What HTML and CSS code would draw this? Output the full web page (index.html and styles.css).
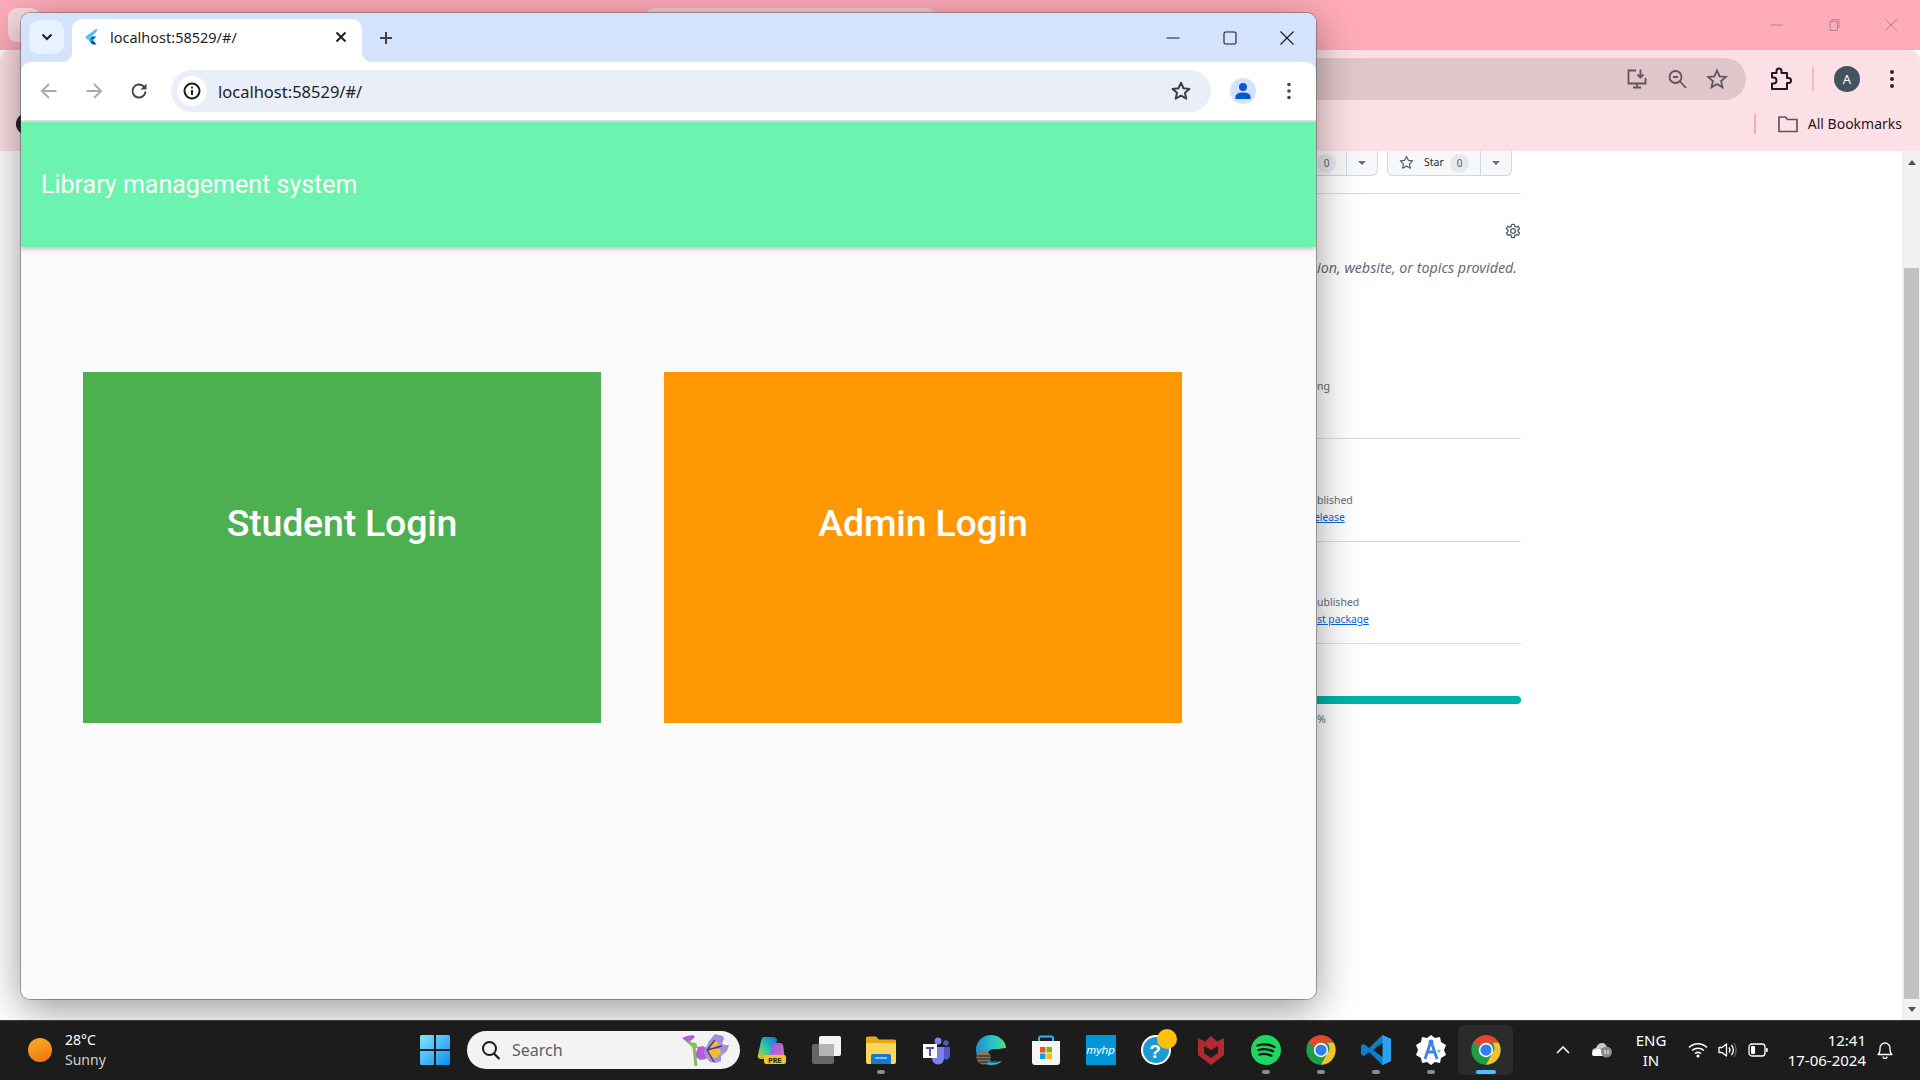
FILE: index.html
```html
<!DOCTYPE html>
<html lang="en">
<head>
<meta charset="utf-8">
<title>Library management system</title>
<link rel="stylesheet" href="styles.css">
</head>
<body>
<svg class="defs" width="0" height="0" aria-hidden="true">
  <symbol id="chrome" viewBox="0 0 48 48">
    <circle cx="24" cy="24" r="23.500" fill="#1f9e4a"/>
    <path d="M24 .5A23.500 23.500 0 0 1 44.400 12.500H24a11.500 11.500 0 0 0-10.500 6.800L3.900 12.300A23.500 23.500 0 0 1 24 .5z" fill="#e8452f"/>
    <path d="M44.400 12.500A23.500 23.500 0 0 1 24 47.500l10-17.800a11.500 11.500 0 0 0 0-17.200z" fill="#fbc02d"/>
    <circle cx="24" cy="24" r="11.500" fill="#fff"/>
    <circle cx="24" cy="24" r="9" fill="#2f7ff0"/>
  </symbol>
</svg>
<div class="desktop">
  <div class="screen">
    <section class="win-back">
      <div class="back-title">
        <span class="back-chip"></span>
        <span class="back-tab"></span>
        <div class="back-ctrls">
          <svg width="14" height="14" viewBox="0 0 14 14"><path d="M1 7h12" stroke="#a98a92" fill="none"/></svg>
          <svg width="14" height="14" viewBox="0 0 14 14"><path d="M3 3.500h7.500v9H3zM5 3.500V1.500h7v8h-1.500" stroke="#a98a92" fill="none"/></svg>
          <svg width="14" height="14" viewBox="0 0 14 14"><path d="M1 1l12 12M13 1L1 13" stroke="#a98a92" fill="none"/></svg>
        </div>
      </div>
      <div class="back-tools">
        <div class="back-omni">
          <svg width="24" height="24" viewBox="0 0 24 24"><path d="M11 3.500H3.500v13h17V11M8 20.500h8M12 17v3M15.500 2.500v8M12.500 7.500l3 3 3-3" stroke="#5f5557" stroke-width="1.800" fill="none"/></svg>
          <svg width="24" height="24" viewBox="0 0 24 24"><circle cx="10.500" cy="10" r="6" stroke="#5f5557" stroke-width="1.800" fill="none"/><path d="M15 14.500l6 6.500M8 10h5" stroke="#5f5557" stroke-width="1.800" fill="none"/></svg>
          <svg width="24" height="24" viewBox="0 0 24 24"><path d="M12 3.500l2.600 5.800 6.300.6-4.800 4.200 1.400 6.200L12 17l-5.500 3.300 1.400-6.200-4.800-4.200 6.300-.6z" stroke="#5f5557" stroke-width="1.800" fill="none"/></svg>
        </div>
        <div class="back-actions">
          <svg width="24" height="24" viewBox="0 0 24 24"><path d="M4 6h4.500V4a2.500 2.500 0 0 1 5 0v2H19v5h1.500a2.500 2.500 0 0 1 0 5H19v6H4v-5.500h1.500a3 3 0 0 0 0-6H4z" stroke="#1f1a1c" stroke-width="2" fill="none" stroke-linejoin="round"/></svg>
          <span class="back-sep"></span>
          <span class="back-avatar">A</span>
          <svg width="6" height="20" viewBox="0 0 6 20"><circle cx="3" cy="3" r="2" fill="#2b2527"/><circle cx="3" cy="10" r="2" fill="#2b2527"/><circle cx="3" cy="17" r="2" fill="#2b2527"/></svg>
        </div>
      </div>
      <div class="back-marks">
        <span class="back-logo"></span>
        <span class="marks-sep"></span>
        <svg width="22" height="20" viewBox="0 0 22 20"><path d="M2 3h6.500l2 2.500H20v12H2z" stroke="#5f5557" stroke-width="1.700" fill="none" stroke-linejoin="round"/></svg>
        <span class="marks-label">All Bookmarks</span>
      </div>
      <div class="back-page">
        <div class="gh-col">
          <div class="gh-buttons">
            <div class="gh-btn gh-btn-a"><span class="gh-pill">0</span><span class="gh-caret-box"><i class="gh-caret"></i></span></div>
            <div class="gh-btn gh-btn-b">
              <span class="gh-star-label">
                <svg width="15" height="15" viewBox="0 0 16 16"><path d="M8 1.500l2 4.200 4.600.6-3.400 3.200.9 4.600L8 11.900l-4.100 2.200.9-4.600L1.400 6.300 6 5.700z" stroke="#57606a" stroke-width="1.300" fill="none" stroke-linejoin="round"/></svg>
                Star
              </span>
              <span class="gh-pill">0</span>
              <span class="gh-caret-box"><i class="gh-caret"></i></span>
            </div>
          </div>
          <div class="gh-rule gh-rule-1"></div>
          <div class="gh-gear">
            <svg width="16" height="16" viewBox="0 0 24 24"><circle cx="12" cy="12" r="3.500" stroke="#57606a" stroke-width="2" fill="none"/><path d="M10 2h4l.6 3 2.500 1.200 2.800-1.300 2 3.400-2.400 2 .1 2.700 2.300 2-2 3.400-2.800-1.100-2.500 1.300L14 22h-4l-.6-3.400-2.500-1.300-2.800 1.100-2-3.400 2.300-2-.1-2.700-2.400-2 2-3.400 2.800 1.300L9.400 5z" stroke="#57606a" stroke-width="2" fill="none" stroke-linejoin="round"/></svg>
          </div>
          <p class="gh-about">ion, website, or topics provided.</p>
          <p class="gh-small gh-ng">ng</p>
          <div class="gh-rule gh-rule-2"></div>
          <p class="gh-small gh-pub1">blished</p>
          <a class="gh-link gh-link-a">elease</a>
          <div class="gh-rule gh-rule-3"></div>
          <p class="gh-small gh-pub2">ublished</p>
          <a class="gh-link">st package</a>
          <div class="gh-rule gh-rule-4"></div>
          <div class="gh-bar"></div>
          <p class="gh-small gh-pct">%</p>
        </div>
        <div class="scrollbar">
          <i class="sb-up"></i>
          <div class="sb-track"><div class="sb-thumb"></div></div>
          <i class="sb-down"></i>
        </div>
      </div>
    </section>

    <section class="win-front">
      <div class="browser-chrome">
        <div class="tabstrip">
          <span class="tab-search">
            <svg width="12" height="8" viewBox="0 0 12 8"><path d="M1.500 1.500L6 6l4.500-4.500" stroke="#1f1f1f" stroke-width="2" fill="none"/></svg>
          </span>
          <div class="tab">
            <svg width="12" height="16" viewBox="0 0 12 16"><path d="M11 0L0 8l3 3L12 2V0z" fill="#47c5fb"/><path d="M11.500 7.500H7.200L3.800 11l3.500 4.500h4.300L7.800 11z" fill="#00569e"/><path d="M3.800 11l2.200-2 2 2-2 2z" fill="#00b5f8"/></svg>
            <span class="tab-title">localhost:58529/#/</span>
            <svg class="tab-close" width="12" height="12" viewBox="0 0 12 12"><path d="M1.500 1.500l9 9M10.500 1.500l-9 9" stroke="#1f1f1f" stroke-width="2" fill="none"/></svg>
          </div>
          <svg class="tab-new" width="14" height="14" viewBox="0 0 14 14"><path d="M7 1v12M1 7h12" stroke="#3f4144" stroke-width="2" fill="none"/></svg>
          <div class="win-ctrls">
            <svg width="14" height="14" viewBox="0 0 14 14"><path d="M0.500 7h13" stroke="#1b1b1b" stroke-width="1.100" fill="none"/></svg>
            <svg width="14" height="14" viewBox="0 0 14 14"><rect x="1" y="1" width="12" height="12" rx="1.500" stroke="#1b1b1b" stroke-width="1.100" fill="none"/></svg>
            <svg width="14" height="14" viewBox="0 0 14 14"><path d="M0.500 0.500l13 13M13.500 0.500l-13 13" stroke="#1b1b1b" stroke-width="1.100" fill="none"/></svg>
          </div>
        </div>
        <div class="toolbar">
          <div class="nav-btns">
            <svg width="18" height="18" viewBox="0 0 18 18"><path d="M16.500 9H2M9 2L2 9l7 7" stroke="#a9abae" stroke-width="2" fill="none"/></svg>
            <svg width="18" height="18" viewBox="0 0 18 18"><path d="M1.500 9H16M9 2l7 7-7 7" stroke="#a9abae" stroke-width="2" fill="none"/></svg>
            <svg width="18" height="18" viewBox="0 0 18 18"><path d="M15.500 9.500a6.500 6.500 0 1 1-2-5.200L15.500 6" stroke="#45474a" stroke-width="2" fill="none"/><path d="M16.500 1.500V7.500H10.500z" fill="#45474a"/></svg>
          </div>
          <div class="omnibox">
            <span class="site-info">
              <svg width="18" height="18" viewBox="0 0 18 18"><circle cx="9" cy="9" r="7.500" stroke="#1f1f1f" stroke-width="2" fill="none"/><path d="M9 8v5M9 4.800v1.800" stroke="#1f1f1f" stroke-width="2" fill="none"/></svg>
            </span>
            <span class="url">localhost:58529/#/</span>
            <svg class="omni-star" width="22" height="22" viewBox="0 0 24 24"><path d="M12 3l2.700 6 6.500.7-4.900 4.300 1.500 6.400L12 17l-5.800 3.400 1.500-6.400-4.900-4.300 6.500-.7z" stroke="#3f4144" stroke-width="2.200" fill="none" stroke-linejoin="round"/></svg>
          </div>
          <span class="profile">
            <svg width="18" height="18" viewBox="0 0 18 18"><circle cx="9" cy="5" r="4" fill="#0b57d0"/><path d="M1.500 17v-2.500c0-2.500 3.500-4 7.500-4s7.500 1.500 7.500 4V17z" fill="#0b57d0"/></svg>
          </span>
          <svg class="menu-dots" width="4" height="18" viewBox="0 0 4 18"><circle cx="2" cy="2.500" r="1.800" fill="#45474a"/><circle cx="2" cy="9" r="1.800" fill="#45474a"/><circle cx="2" cy="15.500" r="1.800" fill="#45474a"/></svg>
        </div>
      </div>
      <header class="appbar">Library management system</header>
      <main class="app-body">
        <div class="login-card card-student">Student Login</div>
        <div class="login-card card-admin">Admin Login</div>
      </main>
    </section>
  </div>

  <footer class="taskbar">
    <div class="weather">
      <span class="sun"></span>
      <div class="weather-text"><span>28°C</span><span class="dim">Sunny</span></div>
    </div>
    <div class="task-center">
      <svg class="win-logo" width="30" height="30" viewBox="0 0 30 30">
        <defs><linearGradient id="wg" x1="0" y1="0" x2="1" y2="1"><stop offset="0" stop-color="#7fe6ff"/><stop offset="1" stop-color="#0a8ff0"/></linearGradient></defs>
        <path d="M0 1.500A1.500 1.500 0 0 1 1.500 0H14v14H0zM16 0h12.500A1.500 1.500 0 0 1 30 1.500V14H16zM0 16h14v14H1.500A1.500 1.500 0 0 1 0 28.500zM16 16h14v12.500a1.500 1.500 0 0 1-1.500 1.500H16z" fill="url(#wg)"/>
      </svg>
      <div class="searchbox">
        <svg width="20" height="20" viewBox="0 0 20 20"><circle cx="8.500" cy="8.500" r="6.500" stroke="#1a1a1a" stroke-width="2" fill="none"/><path d="M13 13.500l5.500 5.500" stroke="#1a1a1a" stroke-width="2.200" fill="none"/></svg>
        <span class="search-label">Search</span>
        <svg class="butterfly" width="48" height="34" viewBox="0 0 48 34">
          <path d="M15 33L13 14 6 7" stroke="#7fbf4d" stroke-width="3" fill="none"/>
          <path d="M1 5l5-2 6-1 2 2-3 3-5 2z" fill="#b95bd6"/>
          <path d="M9 9l6 1 2 5-5 0z" fill="#8cc152"/>
          <path d="M15 20l2-6 5-1 5 3 1 5-3 5-6 1-4-3z" fill="#b55fd8"/>
          <path d="M34 1l8 2 1 3-2 5 3 1 4 0-2 6-6 5 0 5-5 2-6-1-5-6-1-4 5-11z" fill="#a391dc"/>
          <path d="M34 7l4 4-5 5 6 0 1 4-5 5-4-1-3-5 3-8z" fill="#f2bc2e"/>
          <path d="M26 17l7 12M34 7l-8 10M26 17l15-4" stroke="#4b3a78" stroke-width="1.300" fill="none"/>
        </svg>
      </div>
      <div class="task-icons">
        <span class="ti">
          <svg width="30" height="30" viewBox="0 0 30 30">
            <defs>
              <linearGradient id="cpa" x1="0" y1="1" x2="1" y2="0"><stop offset="0" stop-color="#f4c21b"/><stop offset=".45" stop-color="#2cc7a8"/><stop offset="1" stop-color="#0f6fe0"/></linearGradient>
              <linearGradient id="cpb" x1="0" y1="0" x2="1" y2="1"><stop offset="0" stop-color="#7a5cf0"/><stop offset="1" stop-color="#f06bb0"/></linearGradient>
            </defs>
            <path d="M8 2h9c2.500 0 3.500 1 4.200 3L15 21c-1 2.500-2 3-4 3H5c-2.500 0-3.800-1.500-3-4L5 6c.8-2.500 1.500-4 3-4z" fill="url(#cpa)"/>
            <path d="M15 8h9c2 0 3 1 3.300 3l1 9c0 2-1 3-3 3h-9c-2 0-3-1-2.500-3l2-9c.3-2 .7-3 1.200-3z" fill="url(#cpb)"/>
            <rect x="8" y="20" width="22" height="9" rx="2" fill="#f5c518"/>
            <text x="19" y="27.500" class="pre">PRE</text>
          </svg>
        </span>
        <span class="ti">
          <svg width="30" height="30" viewBox="0 0 30 30"><rect x="1" y="9" width="22" height="20" rx="2" fill="#666"/><rect x="8" y="1" width="22" height="20" rx="2" fill="#f4f4f4"/><rect x="8" y="9" width="15" height="12" fill="#b5b5b5"/></svg>
        </span>
        <span class="ti ti-on">
          <svg width="30" height="30" viewBox="0 0 30 30"><path d="M0 3a1.500 1.500 0 0 1 1.500-1.500H10l3 3h15.500A1.500 1.500 0 0 1 30 6v6H0z" fill="#e6a817"/><path d="M0 8h30v19a2 2 0 0 1-2 2H2a2 2 0 0 1-2-2z" fill="#fcd75a"/><path d="M5 21a2 2 0 0 1 2-2h16a2 2 0 0 1 2 2v8H5z" fill="#1479cf"/><path d="M9 23h12" stroke="#a7d8ff" stroke-width="1.500"/></svg>
        </span>
        <span class="ti">
          <svg width="30" height="30" viewBox="0 0 30 30"><circle cx="17" cy="6" r="3.500" fill="#7b83eb"/><circle cx="25" cy="8" r="2.800" fill="#5059c9"/><path d="M21 12h8v9a4 4 0 0 1-6 3z" fill="#5059c9"/><path d="M10 12h13v11a6 6 0 0 1-12 1z" fill="#7b83eb"/><rect x="2" y="9" width="14" height="14" fill="#fff"/><path d="M5 12h8v2h-3v7H8v-7H5z" fill="#4b53bc"/></svg>
        </span>
        <span class="ti">
          <svg width="30" height="30" viewBox="0 0 30 30">
            <defs>
              <linearGradient id="eda" x1="0" y1="0" x2="1" y2="0"><stop offset="0" stop-color="#1d8fd6"/><stop offset=".6" stop-color="#2bc3c9"/><stop offset="1" stop-color="#5cdb6f"/></linearGradient>
            </defs>
            <path d="M15 0C6 0 0 7 0 15c0 8 6 15 15 15 4 0 8-1 11-4-7 2-14 0-15-5-.5-4 3-7 7-7 3 0 6 0 12-1C30 6 23 0 15 0z" fill="url(#eda)"/>
            <path d="M6 21c3 6 12 9 20 5-6 1-14 0-15-5z" fill="#0c4f9e"/>
            <ellipse cx="7.500" cy="22.500" rx="7" ry="7" fill="#8a7760"/>
            <path d="M1.500 21h12M1 24h13M3 27h9" stroke="#3f352b" stroke-width="1.500"/>
          </svg>
        </span>
        <span class="ti">
          <svg width="30" height="30" viewBox="0 0 30 30"><path d="M8 8V3.500A2 2 0 0 1 10 1.500h10a2 2 0 0 1 2 2V8" stroke="#29b6f6" stroke-width="2" fill="none"/><path d="M1 6h28v21a3 3 0 0 1-3 3H4a3 3 0 0 1-3-3z" fill="#f5f5f5"/><rect x="9" y="12" width="5.500" height="5.500" fill="#f25022"/><rect x="15.500" y="12" width="5.500" height="5.500" fill="#7fba00"/><rect x="9" y="18.500" width="5.500" height="5.500" fill="#00a4ef"/><rect x="15.500" y="18.500" width="5.500" height="5.500" fill="#ffb900"/></svg>
        </span>
        <span class="ti"><span class="myhp">myhp</span></span>
        <span class="ti">
          <svg width="46" height="46" viewBox="0 0 46 46"><circle cx="23" cy="23" r="15" fill="#fff"/><circle cx="23" cy="23" r="13" fill="#1b9ad6"/><text x="22" y="31" class="qm">?</text><circle cx="34" cy="12" r="10" fill="#fdc10c"/></svg>
        </span>
        <span class="ti">
          <svg width="28" height="30" viewBox="0 0 28 30"><path d="M1 3l7 3.500L14 1l6 5.500L27 3v17l-13 10L1 20z" fill="#b02a2f"/><path d="M7 11l7 4 7-4v7l-7 5-7-5z" fill="#1c1c1c"/></svg>
        </span>
        <span class="ti ti-on">
          <svg width="30" height="30" viewBox="0 0 30 30"><circle cx="15" cy="15" r="15" fill="#1ed760"/><path d="M6.500 10.500c6-1.800 12-1.300 17 1.500M7.500 15c5-1.400 10-1 14.500 1.300M8.500 19.500c4-1 8-.7 12 1.200" stroke="#191414" stroke-width="2.300" stroke-linecap="round" fill="none"/></svg>
        </span>
        <span class="ti ti-on"><svg width="30" height="30"><use href="#chrome"/></svg></span>
        <span class="ti ti-on">
          <svg width="30" height="30" viewBox="0 0 30 30"><path d="M21.500 0L30 4v22l-8.500 4L8 17l-5 4-3-1.500v-9L3 9l5 4z" fill="#0b7fcc"/><path d="M21.500 0L30 4v22l-8.500 4z" fill="#2ba4ef"/><path d="M21.500 8L12 15l9.500 7z" fill="#1c1c1c"/></svg>
        </span>
        <span class="ti ti-on">
          <svg width="30" height="30" viewBox="0 0 30 30"><path d="M15 0l4 3 5-1 1 5 5 3-2 5 2 5-5 3-1 5-5-1-4 3-4-3-5 1-1-5-5-3 2-5-2-5 5-3 1-5 5 1z" fill="#fff"/><path d="M15 6L9 24M15 6l6 18M11 17h8" stroke="#3f7fe8" stroke-width="2.800" fill="none"/><circle cx="15" cy="7" r="2.500" fill="#3f7fe8"/><circle cx="23" cy="16" r="1.500" fill="#3ddc84"/></svg>
        </span>
        <span class="ti ti-active"><svg width="30" height="30"><use href="#chrome"/></svg></span>
      </div>
    </div>
    <div class="tray">
      <svg class="tray-caret" width="14" height="8" viewBox="0 0 14 8"><path d="M1 7l6-6 6 6" stroke="#fff" stroke-width="1.500" fill="none"/></svg>
      <svg class="tray-cloud" width="22" height="16" viewBox="0 0 22 16"><path d="M1 10c0-3 2-4 4-4 1-3 3-5 6-5s4 2 5 4" fill="#c8c8c8"/><path d="M1 12c0-3 3-5 7-5s4 3 4 7H3a2 2 0 0 1-2-2z" fill="#fff"/><circle cx="15.500" cy="10" r="5.500" fill="#8a8a8a"/><path d="M14 8v4M17 8v4" stroke="#fff"/></svg>
      <div class="lang"><span>ENG</span><span>IN</span></div>
      <svg class="tray-wifi" width="20" height="16" viewBox="0 0 20 16"><path d="M1 5.500c5-5 13-5 18 0M4 8.500c3.500-3 8.500-3 12 0M7 11.500c2-1.500 4-1.500 6 0" stroke="#fff" stroke-width="1.500" fill="none"/><circle cx="10" cy="14" r="1.500" fill="#fff"/></svg>
      <svg class="tray-vol" width="20" height="18" viewBox="0 0 20 18"><path d="M1 6.500h3L8.500 3v12L4 11.500H1z" stroke="#fff" stroke-width="1.300" fill="none" stroke-linejoin="round"/><path d="M11 6.500c1.200 1.500 1.200 3.500 0 5M13.500 4c2.200 3 2.200 7 0 10" stroke="#fff" stroke-width="1.300" fill="none"/><path d="M16 2c2.800 4 2.800 10 0 14" stroke="#666" stroke-width="1.200" fill="none"/></svg>
      <svg class="tray-batt" width="20" height="14" viewBox="0 0 20 14"><rect x="1" y="1" width="16" height="12" rx="3" stroke="#fff" stroke-width="1.300" fill="none"/><rect x="3" y="3" width="4" height="8" rx="1" fill="#fff"/><rect x="17.800" y="5" width="2" height="4" rx="1" fill="#fff"/></svg>
      <div class="clock"><span>12:41</span><span>17-06-2024</span></div>
      <svg class="tray-bell" width="16" height="18" viewBox="0 0 16 18"><path d="M1 13.500c1.500-1 2-2 2-4.500V7a5 5 0 0 1 10 0v2c0 2.500.5 3.500 2 4.500z" stroke="#fff" stroke-width="1.300" fill="none" stroke-linejoin="round"/><path d="M6 15.500a2 2 0 0 0 4 0" stroke="#fff" stroke-width="1.300" fill="none"/></svg>
    </div>
  </footer>
</div>
</body>
</html>
```

FILE: styles.css
```css
* { box-sizing: border-box; }
html, body { margin: 0; padding: 0; width: 1920px; height: 1080px; overflow: hidden; }
body { font-family: "Noto Sans", sans-serif; background: #fff; }
p { margin: 0; }
.defs { position: absolute; }

.desktop { width: 1920px; height: 1080px; display: flex; flex-direction: column; }
.screen { position: relative; height: 1020px; overflow: hidden; }

/* rear window */
.win-back { position: absolute; inset: 0; display: flex; flex-direction: column; background: #fff; }
.back-title { height: 50px; background: #ffabb9; display: flex; align-items: flex-start; position: relative; }
.back-chip { width: 32px; height: 34px; margin: 8px 0 0 8px; border-radius: 9px; background: #f9dce2; }
.back-tab { width: 292px; height: 42px; margin: 8px 0 0 605px; border-radius: 10px 10px 0 0; background: #f9c9d2; }
.back-ctrls { margin-left: auto; display: flex; gap: 43px; padding: 18px 22px 0 0; }
.back-tools { height: 51px; background: #fde0e6; border-radius: 10px 10px 0 0; display: flex; align-items: center; justify-content: flex-end; padding-right: 25px; }
.back-omni { width: 800px; height: 42px; background: #e0c6cb; border-radius: 0 21px 21px 0; display: flex; align-items: center; justify-content: flex-end; gap: 16px; padding-right: 17px; margin-top: 7px; }
.back-actions { display: flex; align-items: center; margin-left: 22px; margin-top: 7px; }
.back-sep { width: 2px; height: 24px; background: #f8b4c1; margin: 0 20px 0 20px; }
.back-avatar { width: 26px; height: 26px; border-radius: 50%; background: #42535f; color: #fff; font-size: 13px; display: flex; align-items: center; justify-content: center; margin-right: 29px; }
.back-marks { height: 50px; background: #fde0e6; display: flex; align-items: center; padding: 0 18px 4px 0; }
.back-logo { width: 22px; height: 22px; margin-left: 16px; background: #1f2328; border-radius: 50%; margin-right: auto; }
.marks-sep { width: 2px; height: 20px; background: #f7a9b8; margin-right: 21px; }
.marks-label { margin-left: 9px; font-size: 14px; color: #1f1a1c; line-height: 20px; }

.back-page { flex: 1; display: flex; background: #fff; min-height: 0; }
.gh-col { width: 204px; margin-left: 1317px; position: relative; display: flex; flex-direction: column; color: #656d76; }
.gh-buttons { display: flex; height: 25px; gap: 9px; padding-left: 0; }
.gh-btn { display: flex; align-items: center; height: 25px; background: #f6f8fa; border: 1px solid #d0d7de; border-top: 0; border-radius: 0 0 6px 6px; font-size: 10.500px; color: #24292f; }
.gh-btn-a { width: 61px; border-left: 0; border-radius: 0 0 6px 0; padding-left: 0; }
.gh-btn-b { width: 125px; }
.gh-pill { width: 19px; height: 19px; border-radius: 50%; background: #e6e9ec; display: flex; align-items: center; justify-content: center; color: #57606a; font-size: 10px; }
.gh-star-label { display: flex; align-items: center; gap: 10px; padding-left: 11px; width: 62px; white-space: nowrap; margin-top: -2px; }
.gh-caret-box { margin-left: auto; width: 31px; height: 100%; border-left: 1px solid #d0d7de; display: flex; align-items: center; justify-content: center; }
.gh-caret { border: 4px solid transparent; border-top-color: #656d76; border-bottom: 0; }
.gh-rule { height: 1px; background: #d8dee4; flex: none; }
.gh-rule-1 { margin-top: 17px; }
.gh-gear { display: flex; justify-content: flex-end; margin-top: 29px; height: 16px; }
.gh-about { font-size: 14.300px; line-height: 20px; font-style: italic; color: #656d76; margin-top: 19px; white-space: nowrap; }
.gh-small { font-size: 10.500px; line-height: 16px; color: #656d76; }
.gh-ng { margin-top: 100px; }
.gh-rule-2 { margin-top: 44px; }
.gh-pub1 { margin-top: 53px; }
.gh-link { font-size: 10.300px; line-height: 16px; color: #0969da; text-decoration: underline; margin-top: 1px; }
.gh-link-a { margin-left: -3px; }
.gh-rule-3 { margin-top: 16px; }
.gh-pub2 { margin-top: 52px; }
.gh-rule-4 { margin-top: 16px; }
.gh-bar { height: 8px; margin-top: 52px; background: #00b3a8; border-radius: 0 4px 4px 0; }
.gh-pct { margin-top: 7px; }

.scrollbar { margin-left: auto; width: 18px; background: #f1f1f1; display: flex; flex-direction: column; align-items: center; border-left: 1px solid #e8e8e8; }
.sb-up { margin-top: 9px; border: 4px solid transparent; border-bottom: 5px solid #505050; border-top: 0; }
.sb-track { flex: 1; width: 15px; display: flex; flex-direction: column; justify-content: flex-end; padding: 0 0 5px; }
.sb-thumb { height: 731px; background: #c1c1c1; margin-bottom: 0; }
.sb-down { margin-bottom: 8px; margin-top: 3px; border: 4px solid transparent; border-top: 5px solid #505050; border-bottom: 0; }

/* front window */
.win-front { position: absolute; left: 21px; top: 13px; width: 1295px; height: 986px; display: flex; flex-direction: column; background: #fafafa; border-radius: 9px; overflow: hidden; box-shadow: 0 10px 42px rgba(0,0,0,.42), 0 0 0 1px rgba(90,90,90,.45); }
.browser-chrome { background: #d3e3fd; flex: none; }
.tabstrip { height: 49px; display: flex; align-items: flex-start; padding-left: 8px; }
.tab-search { width: 35px; height: 34px; margin-top: 7px; border-radius: 10px; background: #e9f1fe; display: flex; align-items: center; justify-content: center; }
.tab { width: 290px; height: 43px; margin: 6px 0 0 8px; background: #fff; border-radius: 10px 10px 0 0; display: flex; align-items: center; padding: 0 15px 8px 13px; gap: 13px; position: relative; }
.tab::before, .tab::after { content: ""; position: absolute; bottom: 0; width: 10px; height: 10px; }
.tab::before { left: -10px; background: radial-gradient(circle at 0 0, transparent 9.500px, #fff 10.500px); }
.tab::after { right: -10px; background: radial-gradient(circle at 100% 0, transparent 9.500px, #fff 10.500px); }
.tab-title { font-size: 14.500px; color: #1f1f1f; flex: 1; white-space: nowrap; }
.tab-new { margin: 18px 0 0 17px; }
.win-ctrls { margin-left: auto; display: flex; gap: 43px; padding: 18px 22px 0 0; }
.toolbar { height: 60px; background: #fff; display: flex; align-items: center; border-bottom: 2px solid #e1e3e6; border-radius: 10px 10px 0 0; }
.nav-btns { display: flex; gap: 27px; padding-left: 19px; width: 150px; }
.omnibox { width: 1040px; height: 42px; background: #e9eef8; border-radius: 21px; display: flex; align-items: center; padding: 0 19px 0 6px; }
.site-info { width: 30px; height: 30px; border-radius: 50%; background: #fff; display: flex; align-items: center; justify-content: center; flex: none; }
.url { margin-left: 11px; font-size: 16.500px; color: #1f1f1f; flex: 1; white-space: nowrap; }
.profile { width: 26px; height: 26px; margin-left: 19px; border-radius: 50%; background: #d3e3fd; display: flex; align-items: center; justify-content: center; }
.menu-dots { margin-left: 31px; }
.appbar { height: 125px; flex: none; background: #6bf3af; color: #fff; font-family: Roboto, sans-serif; font-size: 25px; line-height: 125px; padding-left: 20px; box-shadow: 0 2px 5px rgba(0,0,0,.25); position: relative; }
.app-body { flex: 1; display: flex; align-items: flex-start; gap: 63px; padding: 125px 0 0 62px; background: #fafafa; }
.login-card { width: 518px; height: 351px; color: #fff; font-family: Roboto, sans-serif; font-weight: 500; font-size: 37.500px; letter-spacing: -.2px; display: flex; align-items: center; justify-content: center; padding-bottom: 49px; }
.card-student { background: #4caf50; }
.card-admin { background: #ff9800; }

/* taskbar */
.taskbar { height: 60px; flex: none; background: #1c1c1c; border-top: 1px solid #3b3b3b; display: flex; align-items: center; color: #fff; position: relative; padding-bottom: 1px; }
.weather { display: flex; align-items: center; padding-left: 28px; width: 420px; flex: none; }
.sun { width: 24px; height: 24px; border-radius: 50%; background: linear-gradient(160deg, #f4b223, #f3700f); flex: none; }
.weather-text { display: flex; flex-direction: column; margin-left: 13px; font-size: 14px; line-height: 20px; }
.dim { color: #d0d0d0; }
.task-center { display: flex; align-items: center; flex: none; }
.win-logo { display: block; }
.searchbox { width: 273px; height: 38px; margin-left: 17px; background: #f3f3f3; border-radius: 19px; display: flex; align-items: center; padding: 0 11px 0 14px; }
.search-label { margin-left: 11px; color: #5d5d5d; font-size: 16px; flex: 1; }
.task-icons { display: flex; margin-left: 3px; }
.ti { width: 55px; height: 50px; display: flex; align-items: center; justify-content: center; position: relative; }
.ti-on::after { content: ""; position: absolute; bottom: 1px; left: 23.500px; width: 8px; height: 4px; border-radius: 2px; background: #8c8c8c; }
.ti-active { background: #2b2b2b; border-radius: 6px; }
.ti-active::after { content: ""; position: absolute; bottom: 1px; left: 17.500px; width: 20px; height: 4px; border-radius: 2px; background: #4cc2ff; }
.myhp { width: 30px; height: 30px; background: #0096d6; color: #fff; font-family: "Liberation Sans", sans-serif; font-style: italic; font-size: 11.500px; line-height: 30px; text-align: center; }
.pre { font: 700 7.500px "Liberation Mono", monospace; fill: #1c1c1c; text-anchor: middle; }
.qm { font: 700 19px "Liberation Sans", sans-serif; fill: #fff; text-anchor: middle; }

.tray { position: absolute; right: 0; top: 0; height: 57px; width: 364px; display: flex; align-items: center; }
.tray-caret { margin-left: 0; }
.tray-cloud { margin-left: 21px; }
.lang { display: flex; flex-direction: column; align-items: center; width: 40px; margin-left: 18px; font-size: 15px; line-height: 20px; }
.tray-wifi { margin-left: 17px; }
.tray-vol { margin-left: 10px; }
.tray-batt { margin-left: 10px; }
.clock { display: flex; flex-direction: column; align-items: flex-end; width: 98px; font-size: 15px; line-height: 20px; }
.tray-bell { margin-left: 11px; }
```
